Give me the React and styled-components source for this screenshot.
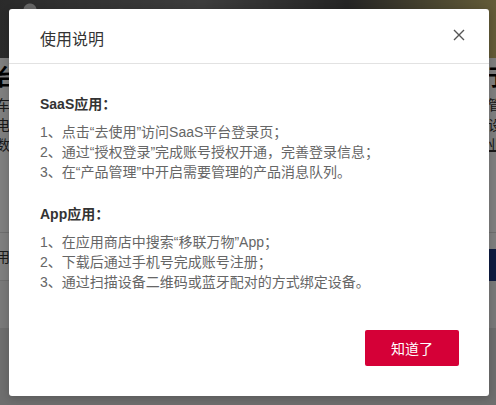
import styled, { createGlobalStyle } from 'styled-components';

const GlobalStyle = createGlobalStyle`
    html, body {
        margin: 0;
        padding: 0;
    }
    body {
        width: 496px;
        height: 405px;
        overflow: hidden;
        font-family: "Liberation Sans", "Noto Sans CJK SC", sans-serif;
    }
`;

const Page = styled.div`
    position: relative;
    width: 496px;
    height: 405px;
    background: #fff;
    overflow: hidden;
`;

const Banner = styled.div`
    height: 58px;
    background:
        radial-gradient(circle at 30px 10px, #ccc 0 6px, transparent 7px),
        radial-gradient(circle at 120px 30px, #999 0 20px, transparent 22px),
        linear-gradient(90deg, #555 0%, #7a7a7a 40%, #4a4a4a 70%, #c8b870 100%);
`;

const Section = styled.div`
    display: flex;
    justify-content: space-between;
    padding: 7px 0 0;
    height: 174px;
    box-sizing: border-box;
`;

const Column = styled.div`
    display: flex;
    flex-direction: column;
    align-items: ${p => (p.$right ? 'flex-end' : 'flex-start')};
    color: #333;
    font-size: 14px;
    line-height: 20px;
    margin: ${p => (p.$right ? '0 -6px 0 0' : '0 0 0 -4px')};
`;

const BigGlyph = styled.div`
    font-size: 22px;
    font-weight: bold;
    color: #000;
    line-height: 26px;
    margin-bottom: 4px;
`;

const Band = styled.div`
    height: ${p => p.$h}px;
    background: ${p => p.$bg};
    border-top: ${p => (p.$line ? '1px solid #ddd' : 'none')};
    font-size: 14px;
    line-height: ${p => p.$h}px;
    color: #333;
    display: flex;
    justify-content: space-between;
    box-sizing: border-box;
`;

const BlueBlock = styled.div`
    width: 40px;
    height: 32px;
    margin-top: 16px;
    background: #1c3680;
`;

const Mask = styled.div`
    position: absolute;
    inset: 0;
    background: rgba(0, 0, 0, 0.5);
`;

const Modal = styled.div`
    position: absolute;
    left: 9px;
    top: 9px;
    width: 480px;
    height: 387px;
    background: #fff;
    border-radius: 3px;
    box-shadow: 0 2px 8px rgba(0, 0, 0, 0.2);
    display: flex;
    flex-direction: column;
`;

const Header = styled.div`
    display: flex;
    align-items: center;
    justify-content: space-between;
    padding: 19px 22px 11px 31px;
    border-bottom: 1px solid #e2e2e2;
`;

const Title = styled.div`
    font-size: 16px;
    line-height: 24px;
    color: #333;
`;

const Close = styled.button`
    width: 16px;
    height: 16px;
    padding: 0;
    border: 0;
    background: none;
    cursor: pointer;
    margin-top: -10px;
    display: flex;
    align-items: center;
    justify-content: center;
`;

const Body = styled.div`
    flex: 1;
    padding: 30px 30px 0 31px;
`;

const Group = styled.div`
    margin-bottom: 22px;
`;

const GroupTitle = styled.div`
    font-size: 14px;
    line-height: 20px;
    font-weight: bold;
    color: #333;
    margin-bottom: 8px;
`;

const Line = styled.div`
    font-size: 14px;
    line-height: 20px;
    color: #666;
`;

const Footer = styled.div`
    display: flex;
    justify-content: flex-end;
    padding: 0 30px 30px;
`;

const OkButton = styled.button`
    width: 94px;
    height: 36px;
    border: 0;
    border-radius: 2px;
    background: #d50037;
    color: #fff;
    font-family: inherit;
    font-size: 14px;
    cursor: pointer;
`;

const groups = [
    {
        title: 'SaaS应用：',
        lines: [
            '1、点击“去使用”访问SaaS平台登录页；',
            '2、通过“授权登录”完成账号授权开通，完善登录信息；',
            '3、在“产品管理”中开启需要管理的产品消息队列。',
        ],
    },
    {
        title: 'App应用：',
        lines: [
            '1、在应用商店中搜索“移联万物”App；',
            '2、下载后通过手机号完成账号注册；',
            '3、通过扫描设备二维码或蓝牙配对的方式绑定设备。',
        ],
    },
];

const App = () => {
    return (
        <Page>
            <GlobalStyle />
            <Banner />
            <Section>
                <Column>
                    <BigGlyph>台</BigGlyph>
                    <div>车</div>
                    <div>电动</div>
                    <div>数字</div>
                </Column>
                <Column $right>
                    <BigGlyph>行</BigGlyph>
                    <div>管</div>
                    <div>设</div>
                    <div style={{ textDecoration: 'underline' }}>业</div>
                </Column>
            </Section>
            <Band $h={48} $bg="#fff" $line>
                <span style={{ marginLeft: -4 }}>用</span>
                <BlueBlock />
            </Band>
            <Band $h={48} $bg="#f2f2f2" $line />
            <Band $h={100} $bg="#dcdcdc" />
            <Mask />
            <Modal>
                <Header>
                    <Title>使用说明</Title>
                    <Close aria-label="关闭">
                        <svg width="12" height="12" viewBox="0 0 12 12">
                            <path d="M1 1L11 11M11 1L1 11" stroke="#555" strokeWidth="1.4" fill="none" />
                        </svg>
                    </Close>
                </Header>
                <Body>
                    {groups.map(g => (
                        <Group key={g.title}>
                            <GroupTitle>{g.title}</GroupTitle>
                            {g.lines.map(l => (
                                <Line key={l}>{l}</Line>
                            ))}
                        </Group>
                    ))}
                </Body>
                <Footer>
                    <OkButton>知道了</OkButton>
                </Footer>
            </Modal>
        </Page>
    );
};

export default App;
